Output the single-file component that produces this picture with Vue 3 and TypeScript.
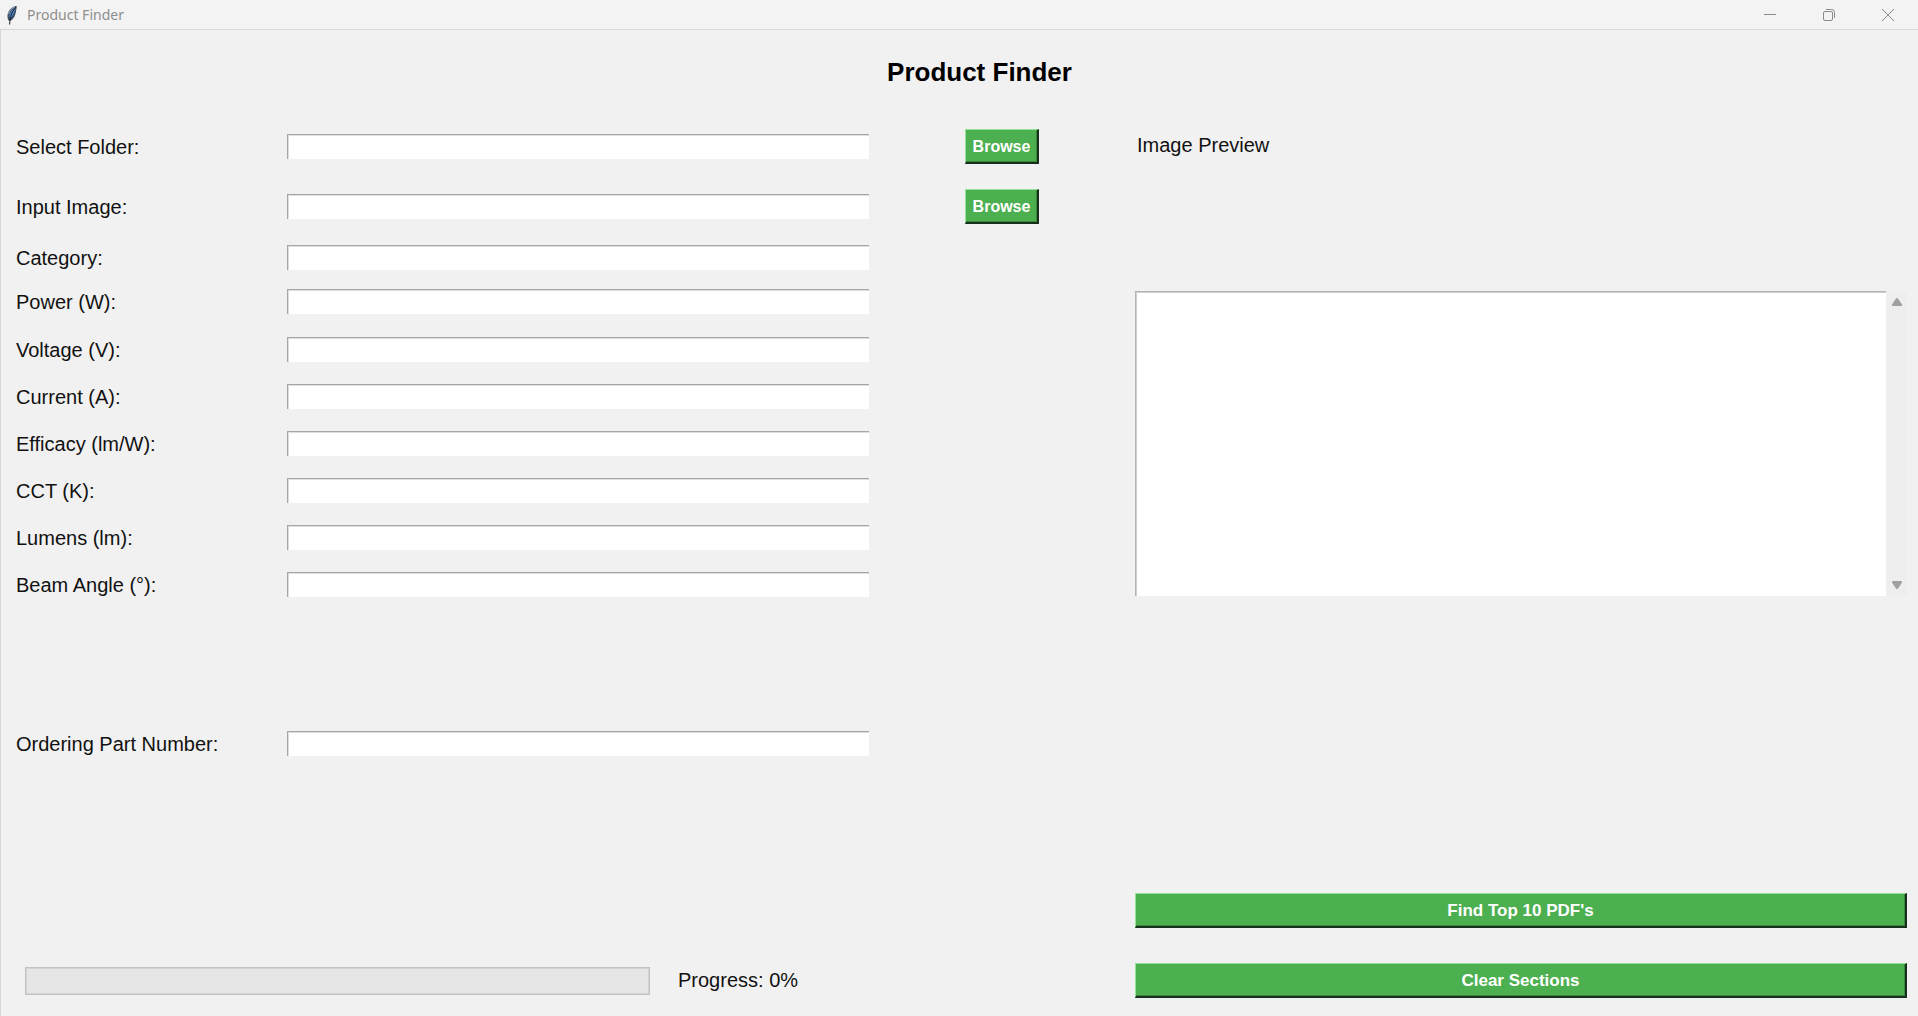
<script setup lang="ts">
import { reactive, ref } from 'vue'

interface Field {
  id: string
  label: string
  browse?: boolean
}

const groups: { name: string; fields: Field[] }[] = [
  {
    name: 'files',
    fields: [
      { id: 'folder', label: 'Select Folder:', browse: true },
      { id: 'image', label: 'Input Image:', browse: true },
    ],
  },
  {
    name: 'kind',
    fields: [
      { id: 'category', label: 'Category:' },
      { id: 'power', label: 'Power (W):' },
    ],
  },
  {
    name: 'specs',
    fields: [
      { id: 'voltage', label: 'Voltage (V):' },
      { id: 'current', label: 'Current (A):' },
      { id: 'efficacy', label: 'Efficacy (lm/W):' },
      { id: 'cct', label: 'CCT (K):' },
      { id: 'lumens', label: 'Lumens (lm):' },
      { id: 'beam', label: 'Beam Angle (°):' },
    ],
  },
  { name: 'order', fields: [{ id: 'part', label: 'Ordering Part Number:' }] },
]

const values = reactive<Record<string, string>>({})
const results = ref('')
const progress = ref(0)

function clearSections() {
  for (const key of Object.keys(values)) values[key] = ''
  results.value = ''
  progress.value = 0
}
</script>

<template>
  <div class="window">
    <header class="titlebar">
      <svg class="feather" width="12" height="22" viewBox="0 0 12 22" aria-hidden="true">
        <path d="M10.500 1C6.500 1.500 3 4.500 1.800 8.500C1.200 11 1.500 13.500 2.500 15.500L4.500 16C8 13.500 9.500 10 10 6.500C10.200 4.500 11 2.500 10.500 1Z" fill="#3d4f66" />
        <path d="M9.300 2.500C6.500 4 4.200 7.500 3.300 11.500L4.500 13C7 10.500 8.500 7 9.300 2.500Z" fill="#4f8fdd" />
        <path d="M10 1.500C6.500 6 4 11 3.600 19.500" fill="none" stroke="#1c2026" stroke-width="1" />
        <path d="M8.800 2C5.500 3.500 3.300 6 2.500 9" fill="none" stroke="#a5b3c2" stroke-width="1" />
      </svg>
      <span class="caption">Product Finder</span>
      <div class="controls">
        <button type="button" aria-label="Minimize">
          <svg width="14" height="14" viewBox="0 0 14 14"><path d="M1 6.500H13" /></svg>
        </button>
        <button type="button" aria-label="Restore">
          <svg width="14" height="14" viewBox="0 0 14 14">
            <rect x="1.500" y="3.500" width="9" height="9" rx="1.500" />
            <path d="M4 1.500H9.500Q12.500 1.500 12.500 4.500V10" />
          </svg>
        </button>
        <button type="button" aria-label="Close">
          <svg width="14" height="14" viewBox="0 0 14 14"><path d="M1 1L13 13M13 1L1 13" /></svg>
        </button>
      </div>
    </header>

    <main class="body">
      <h1>Product Finder</h1>

      <form class="form" @submit.prevent>
        <div v-for="group in groups" :key="group.name" :class="['group', group.name]">
          <div v-for="field in group.fields" :key="field.id" class="row">
            <label :for="field.id">{{ field.label }}</label>
            <input :id="field.id" v-model="values[field.id]" type="text" />
            <button v-if="field.browse" type="button" class="btn browse">Browse</button>
          </div>
        </div>
        <div class="status">
          <progress id="progress" max="100" :value="progress"></progress>
          <label for="progress">Progress: {{ progress }}%</label>
        </div>
      </form>

      <section class="side">
        <p class="preview">Image Preview</p>
        <div class="results">
          <textarea v-model="results" aria-label="Results"></textarea>
          <div class="scroll">
            <button type="button" aria-label="Scroll up">
              <svg width="12" height="10" viewBox="0 0 12 10"><path d="M5 1.500Q6 0.500 7 1.500L11 7.500Q11.500 9 10 9H2Q0.500 9 1 7.500Z" /></svg>
            </button>
            <button type="button" aria-label="Scroll down">
              <svg width="12" height="10" viewBox="0 0 12 10"><path d="M5 8.500Q6 9.500 7 8.500L11 2.500Q11.500 1 10 1H2Q0.500 1 1 2.500Z" /></svg>
            </button>
          </div>
        </div>
        <div class="actions">
          <button type="button" class="btn wide">Find Top 10 PDF's</button>
          <button type="button" class="btn wide" @click="clearSections">Clear Sections</button>
        </div>
      </section>
    </main>
  </div>
</template>

<style>
body {
  margin: 0;
  background: #f1f1f1;
}
</style>

<style scoped>
* {
  box-sizing: border-box;
}

.window {
  display: flex;
  flex-direction: column;
  min-height: 100vh;
  background: #f1f1f1;
  color: #111;
  font-family: "Liberation Sans", Arial, sans-serif;
  font-size: 20px;
}

button {
  margin: 0;
  font-family: inherit;
}

.titlebar {
  display: flex;
  align-items: center;
  height: 30px;
  padding: 0 1px 0 6px;
  border-bottom: 1px solid #d6d6d6;
  background: #f3f3f3;
}

.feather {
  margin-top: 2px;
}

.caption {
  margin-left: 9px;
  color: #8e8e8e;
  font-family: "Noto Sans", sans-serif;
  font-size: 14px;
  line-height: 20px;
}

.controls {
  display: flex;
  margin-left: auto;
}

.controls button {
  display: flex;
  align-items: center;
  justify-content: center;
  width: 59px;
  height: 28px;
  padding: 0;
  border: 0;
  background: none;
}

.controls svg {
  fill: none;
  stroke: #8a8a8a;
  stroke-width: 1;
}

.body {
  flex: 1;
  display: grid;
  grid-template-columns: minmax(0, 1119fr) minmax(0, 772fr);
  grid-template-rows: auto 1fr;
  padding: 0 11px 18px 15px;
  border-left: 1px solid #d6d6d6;
}

h1 {
  grid-column: 1 / 3;
  margin: 26px 0 41px 36px;
  color: #000;
  font-size: 26px;
  line-height: 32px;
  text-align: center;
}

.form,
.side {
  display: flex;
  flex-direction: column;
}

.group {
  display: flex;
  flex-direction: column;
}

.files {
  gap: 25px;
}

.kind {
  gap: 9px;
  margin-top: 16px;
}

.specs {
  gap: 12px;
  margin-top: 13px;
}

.order {
  margin-top: 124px;
}

.row {
  display: grid;
  grid-template-columns: minmax(0, 271fr) minmax(0, 582fr) minmax(0, 266fr);
  align-items: center;
  height: 35px;
}

.row label {
  padding-top: 2px;
}

.row input {
  width: 100%;
  height: 25px;
  padding: 0 4px;
  border: 0 solid #a6a6a6;
  border-width: 1px 0 0 1px;
  border-radius: 0;
  outline: 0;
  background: #fff;
  box-shadow: inset 1px 1px 0 #dedede;
  font: inherit;
}

.btn {
  height: 35px;
  padding: 2px 0 0;
  border: 2px solid;
  border-color: #94e297 #16301a #16301a #94e297;
  border-width: 1px 2px 2px 1px;
  background: #4caf50;
  box-shadow: inset -1px -1px 0 #3a863d;
  color: #fff;
  font-weight: 700;
}

.browse {
  justify-self: center;
  width: 74px;
  font-size: 16px;
}

.wide {
  width: 100%;
  font-size: 17px;
}

.status {
  display: grid;
  grid-template-columns: minmax(0, 625fr) minmax(0, 457fr);
  column-gap: 28px;
  align-items: center;
  height: 35px;
  margin-top: auto;
  padding-left: 9px;
}

progress {
  appearance: none;
  width: 100%;
  height: 28px;
  border: 1px solid #c2c2c2;
  background: #e6e6e6;
  box-shadow: inset 0 0 0 1px #d4d4d4;
}

progress::-webkit-progress-bar {
  background: transparent;
}

progress::-webkit-progress-value {
  background: #06b025;
}

.preview {
  margin: 0 0 0 2px;
  line-height: 32px;
}

.results {
  display: flex;
  height: 305px;
  margin-top: 130px;
}

textarea {
  flex: 1;
  min-width: 0;
  padding: 4px;
  border: 0 solid #b4b4b4;
  border-width: 1px 0 0 1px;
  border-radius: 0;
  outline: 0;
  background: #fff;
  box-shadow: inset 1px 1px 0 #cfcfcf;
  font: inherit;
  resize: none;
}

.scroll {
  display: flex;
  flex-direction: column;
  justify-content: space-between;
  width: 20px;
  margin-left: 1px;
  background: #eee;
}

.scroll button {
  display: flex;
  align-items: center;
  justify-content: center;
  height: 22px;
  padding: 0;
  border: 0;
  background: none;
}

.scroll svg {
  fill: #a0a0a0;
}

.actions {
  display: flex;
  flex-direction: column;
  gap: 35px;
  margin-top: auto;
}
</style>
